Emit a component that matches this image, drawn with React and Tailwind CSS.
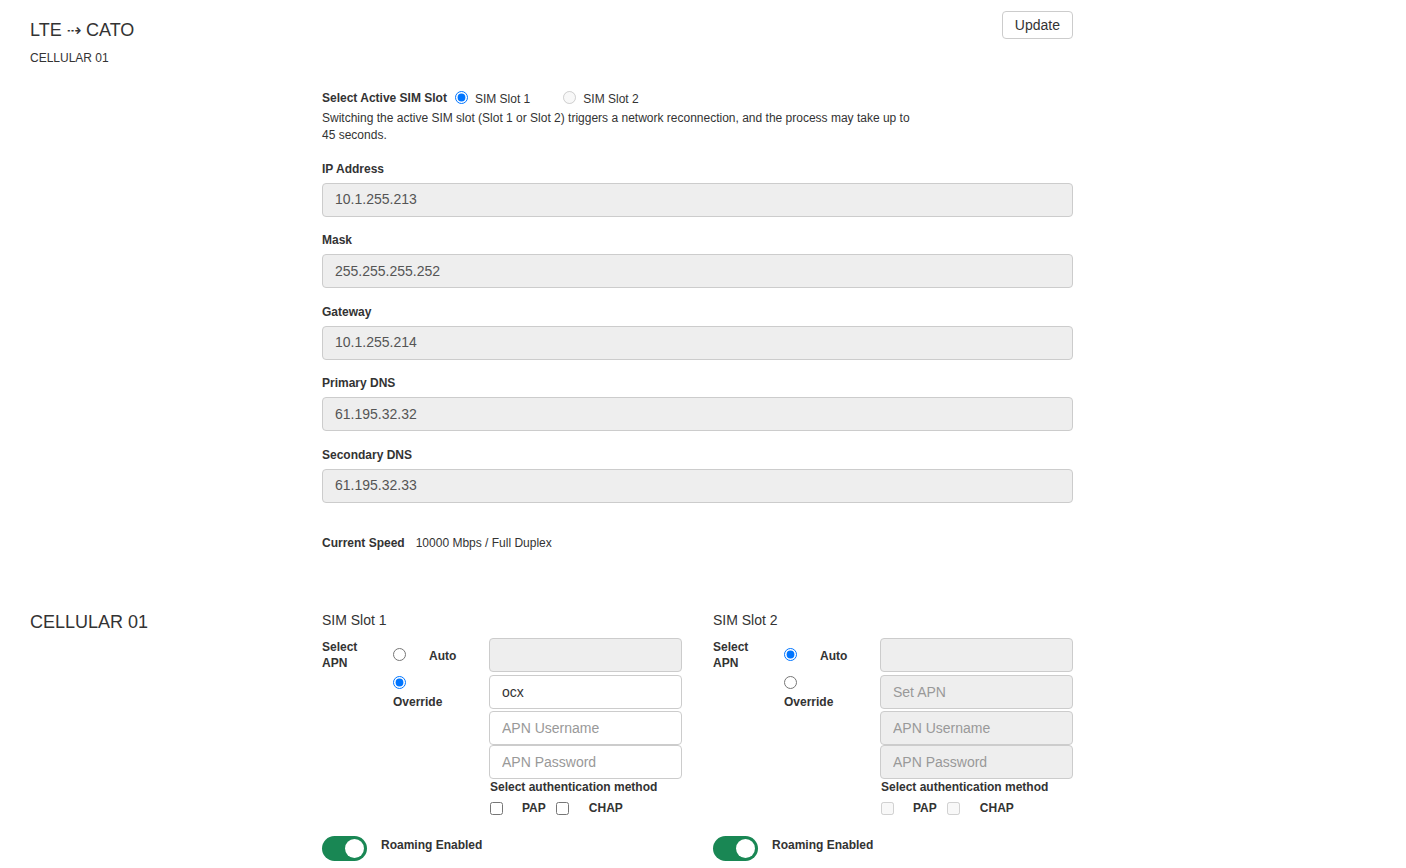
import React from "react";

const font = { fontFamily: '"Liberation Sans", Arial, sans-serif' };

function Field({ label, value, last }) {
  return (
    <div className={last ? "" : "mb-[15.5px]"}>
      <div className="text-[12px] leading-[17px] font-bold text-[#333] mb-[5px]">{label}</div>
      <div className="h-[34px] rounded-[4px] border border-[#ccc] bg-[#eee] px-[12px] flex items-center text-[14px] text-[#555]">
        {value}
      </div>
    </div>
  );
}

function ApnInput({ value, placeholder, disabled, className = "" }) {
  return (
    <input
      readOnly
      disabled={disabled}
      value={value || ""}
      placeholder={placeholder}
      className={`block w-full h-[34px] rounded-[4px] border border-[#ccc] px-[12px] text-[14px] text-[#333] placeholder:text-[#999] outline-none ${
        disabled ? "bg-[#eee]" : "bg-white"
      } ${className}`}
    />
  );
}

function Toggle() {
  return (
    <div className="w-[45px] h-[25px] rounded-full bg-[#198754] flex items-center justify-end px-[3px]">
      <div className="w-[19px] h-[19px] rounded-full bg-white" />
    </div>
  );
}

function SimSlot({ title, override }) {
  const disabled = !override;
  return (
    <div className="w-[360px]">
      <div className="text-[14px] leading-[20px] text-[#333] mb-[8px] -mt-[1px]">{title}</div>
      <div className="flex mt-[1px]">
        <div className="w-[71px] text-[12px] leading-[16.5px] font-bold text-[#333] pt-[1px]">
          Select
          <br />
          APN
        </div>
        <div className="w-[96px]">
          <div className="h-[34px] flex items-center">
            <input type="radio" readOnly checked={!override} className="w-[13px] h-[13px] m-0" />
            <span className="ml-[23px] text-[12px] font-bold text-[#333] mt-[2px]">Auto</span>
          </div>
          <div className="mt-[4.5px]">
            <input type="radio" readOnly checked={override} className="block w-[13px] h-[13px] m-0" />
            <div className="mt-[5px] text-[12px] leading-[17px] font-bold text-[#333]">Override</div>
          </div>
        </div>
        <div className="w-[193px]">
          <ApnInput disabled />
          <ApnInput
            className="mt-[3px] text-[13px]"
            value={override ? "ocx" : ""}
            placeholder="Set APN"
            disabled={disabled}
          />
          <ApnInput className="mt-[2px]" placeholder="APN Username" disabled={disabled} />
          <ApnInput className="mt-0" placeholder="APN Password" disabled={disabled} />
          <div className="text-[12px] leading-[17px] font-bold text-[#333] mt-[0.5px] pl-[1px]">
            Select authentication method
          </div>
          <div className="flex items-center mt-[3px] pl-[1px] text-[12px] font-bold text-[#333]">
            <input type="checkbox" readOnly disabled={disabled} className="w-[13px] h-[13px] m-0" />
            <span className="ml-[19px]">PAP</span>
            <input type="checkbox" readOnly disabled={disabled} className="w-[13px] h-[13px] m-0 ml-[10px]" />
            <span className="ml-[20px]">CHAP</span>
          </div>
        </div>
      </div>
      <div className="flex items-center mt-[19px]">
        <Toggle />
        <span className="ml-[14px] text-[12px] font-bold text-[#333] -mt-[8px]">Roaming Enabled</span>
      </div>
    </div>
  );
}

export default function App() {
  return (
    <div style={font} className="min-h-[868px] bg-white text-[#333] pl-[30px]">
      <div className="grid grid-cols-[292px_751px]">
        <div>
          <div className="mt-[20px] text-[18px] leading-[20px] text-[#333]">
            LTE{" "}
            <span style={{ fontFamily: '"DejaVu Sans", sans-serif' }} className="text-[17px]">
              ⇢
            </span>{" "}
            CATO
          </div>
          <div className="mt-[10px] text-[12px] leading-[17px] text-[#333]">CELLULAR 01</div>
        </div>
        <div>
          <div className="flex justify-end pt-[11px]">
            <button className="h-[28px] px-[12px] rounded-[4px] border border-[#ccc] bg-white text-[14px] text-[#333]">
              Update
            </button>
          </div>
          <div className="mt-[49px] h-[19px] flex items-center text-[12px]">
            <span className="font-bold">Select Active SIM Slot</span>
            <input type="radio" readOnly checked className="ml-[8px] w-[13px] h-[13px] m-0" />
            <span className="ml-[7px] mt-[2px]">SIM Slot 1</span>
            <input type="radio" readOnly disabled className="ml-[33px] w-[13px] h-[13px] m-0" />
            <span className="ml-[7px] mt-[2px]">SIM Slot 2</span>
          </div>
          <p className="mt-[3px] text-[12px] leading-[17px] max-w-[595px]">
            Switching the active SIM slot (Slot 1 or Slot 2) triggers a network reconnection, and the process may take up to 45 seconds.
          </p>
          <div className="mt-[16.5px]">
            <Field label="IP Address" value="10.1.255.213" />
            <Field label="Mask" value="255.255.255.252" />
            <Field label="Gateway" value="10.1.255.214" />
            <Field label="Primary DNS" value="61.195.32.32" />
            <Field label="Secondary DNS" value="61.195.32.33" last />
          </div>
          <div className="mt-[32px] text-[12px] leading-[17px]">
            <span className="font-bold">Current Speed</span>
            <span className="ml-[11px]">10000 Mbps / Full Duplex</span>
          </div>
        </div>
      </div>

      <div className="grid grid-cols-[292px_751px] mt-[59px]">
        <div className="text-[18px] leading-[20px] text-[#333] mt-[1px]">CELLULAR 01</div>
        <div className="flex gap-[31px]">
          <SimSlot title="SIM Slot 1" override />
          <SimSlot title="SIM Slot 2" override={false} />
        </div>
      </div>
    </div>
  );
}
